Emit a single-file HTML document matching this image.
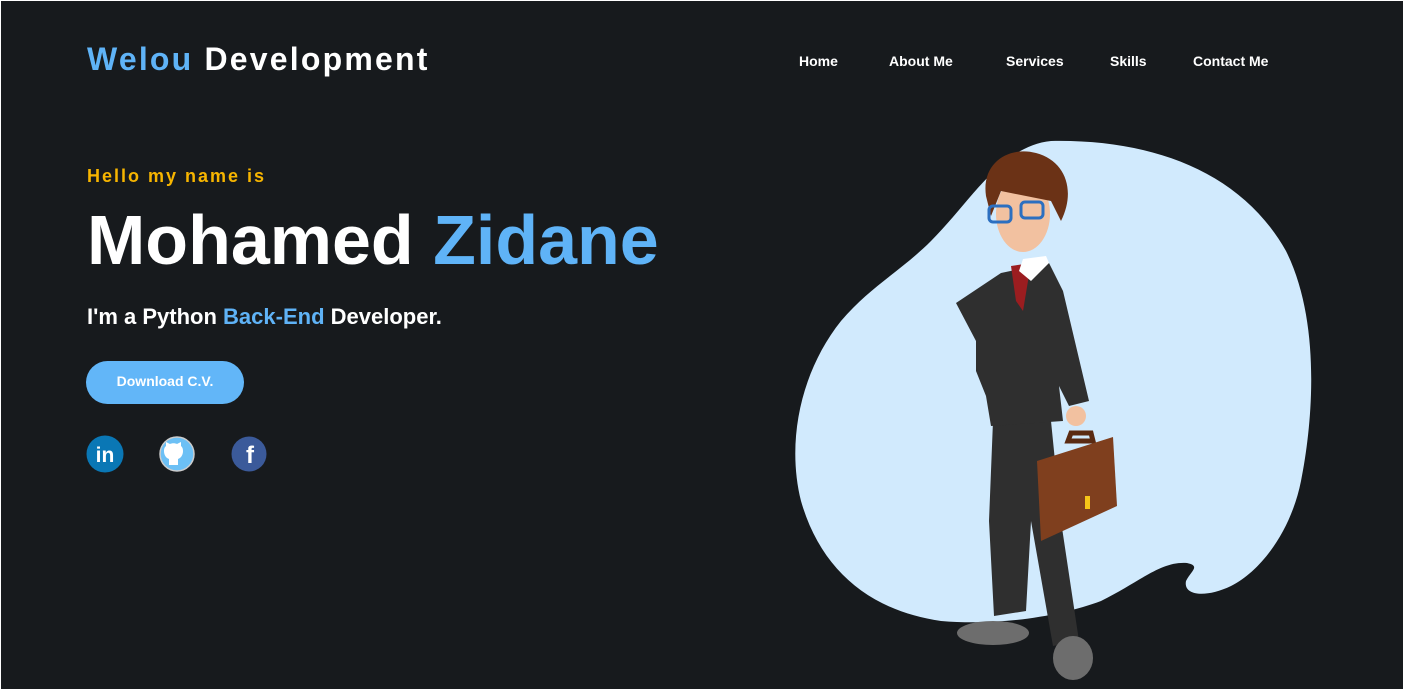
<!DOCTYPE html>
<html><head><meta charset="utf-8"><style>
*{margin:0;padding:0;box-sizing:border-box}
html,body{width:1404px;height:692px;overflow:hidden;background:#fff}
.page{position:absolute;left:1px;top:1px;width:1402px;height:688px;background:#171a1d;font-family:"Liberation Sans",sans-serif;color:#fff}
.abs{position:absolute;white-space:nowrap}
.logo{left:86px;top:40px;font-size:32px;font-weight:bold;letter-spacing:2.2px}
.blue{color:#5fb3f7}
.nav{top:52px;font-size:14px;font-weight:bold}
.hello{left:86px;top:165px;font-size:18px;font-weight:bold;color:#f7b500;letter-spacing:2px}
.name{left:86px;top:199px;font-size:70px;font-weight:bold;letter-spacing:0}
.sub{left:86px;top:303px;font-size:22px;font-weight:bold}
.btn{left:85px;top:360px;width:158px;height:43px;border-radius:22px;background:#62b6f8;font-size:14px;font-weight:bold;text-align:center;line-height:41px}
</style></head><body><div class="page">
<div class="abs logo"><span class="blue">Welou</span> Development</div>
<div class="abs nav" style="left:798px">Home</div>
<div class="abs nav" style="left:888px">About Me</div>
<div class="abs nav" style="left:1005px">Services</div>
<div class="abs nav" style="left:1109px">Skills</div>
<div class="abs nav" style="left:1192px">Contact Me</div>
<div class="abs hello">Hello my name is</div>
<div class="abs name">Mohamed <span class="blue">Zidane</span></div>
<div class="abs sub">I'm a Python <span class="blue">Back-End</span> Developer.</div>
<div class="abs btn">Download C.V.</div>
<svg class="abs" style="left:84px;top:434px" width="190" height="40">
<circle cx="20" cy="19" r="18.5" fill="#0a77b5"/><text x="20" y="27" font-family="Liberation Sans" font-weight="bold" font-size="21" fill="#fff" text-anchor="middle">in</text>
<circle cx="92" cy="19" r="17" fill="#6cc0f5" stroke="#ccc" stroke-width="1.5"/><path d="M84 30v-6c-3-1-5-4-5-8 0-3 1-4 2-5l0-4 4 2c2-1 5-1 7 0 2-1 4-2 4-2l0 4c1 1 2 2 2 5 0 4-2 7-5 8v6z" fill="#fff"/>
<circle cx="164" cy="19" r="17.5" fill="#3b5a9a"/><text x="165" y="28" font-family="Liberation Sans" font-weight="bold" font-size="24" fill="#fff" text-anchor="middle">f</text>
</svg>
<svg class="abs" style="left:0;top:0" width="1402" height="688">
<path d="M1050 140C1150 138 1240 170 1285 250C1320 320 1312 420 1300 480C1290 530 1260 570 1230 585C1205 597 1182 595 1185 580C1190 570 1200 565 1186 562C1160 560 1140 580 1100 600C1060 615 1000 625 940 620C870 610 820 570 800 500C785 440 800 370 840 320C870 285 900 270 930 240C970 200 1000 145 1050 140Z" fill="#d1eafd"/>
<path d="M992 420L1050 420L1060 520L1078 640L1052 645L1030 520L1025 610L993 615L988 520Z" fill="#2f2f2f"/>
<ellipse cx="992" cy="632" rx="36" ry="12" fill="#6d6d6d"/><ellipse cx="1072" cy="657" rx="20" ry="22" fill="#6d6d6d"/>
<path d="M1000 272L1048 262L1062 290L1088 400L1068 405L1058 385L1062 420L990 425L985 395L975 370L975 340L955 302Z" fill="#2f2f2f"/>
<path d="M1010 265L1030 262L1022 310L1015 300Z" fill="#9b1d20"/>
<path d="M1022 258L1045 255L1048 262L1030 280L1018 270Z" fill="#fff"/>
<circle cx="1075" cy="415" r="10" fill="#f2c1a0"/>
<ellipse cx="1022" cy="213" rx="27" ry="38" fill="#f2c1a0"/>
<path d="M985 195C980 160 1010 145 1035 152C1065 160 1075 190 1060 220L1050 200L1000 190L990 215Z" fill="#6b3216"/>
<rect x="988" y="205" width="22" height="16" rx="4" fill="none" stroke="#2c6fc0" stroke-width="3"/><rect x="1020" y="201" width="22" height="16" rx="4" fill="none" stroke="#2c6fc0" stroke-width="3"/>
<path d="M1067 440L1070 432L1090 432L1092 440Z" fill="none" stroke="#5a2a12" stroke-width="5"/>
<path d="M1036 460L1112 436L1116 505L1040 540Z" fill="#7f3f1e"/>
<rect x="1084" y="495" width="5" height="13" fill="#f5c518"/>
</svg>
</div></body></html>
